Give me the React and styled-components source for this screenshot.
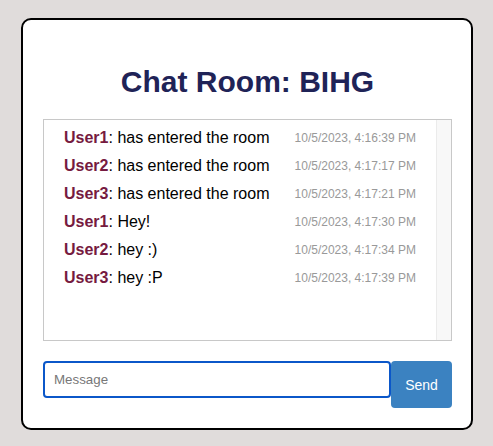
import React from "react";
import styled, { createGlobalStyle } from "styled-components";

const GlobalStyle = createGlobalStyle`
  html, body {
    margin: 0;
    padding: 0;
    background: #e0dcdb;
    font-family: "Liberation Sans", Arial, sans-serif;
  }
  * { box-sizing: border-box; }
`;

const Page = styled.div`
  padding: 18px 0 0 21px;
`;

const Card = styled.div`
  width: 452px;
  background: #fff;
  border: 2px solid #000;
  border-radius: 10px;
  padding: 0 19px 20px 20px;
`;

const Title = styled.h1`
  margin: 44px 0 19px;
  font-size: 30px;
  line-height: 36px;
  font-weight: 700;
  color: #1f2357;
  text-align: center;
`;

const ChatBox = styled.div`
  display: flex;
  height: 222px;
  border: 1px solid #c8c8c8;
`;

const MessageList = styled.div`
  flex: 1;
  overflow-y: auto;
  padding: 4px 0;
`;

const ScrollTrack = styled.div`
  width: 15px;
  flex: none;
  background: #f8f8f8;
  border-left: 1px solid #ebebeb;
`;

const Row = styled.div`
  display: flex;
  justify-content: space-between;
  align-items: center;
  padding: 5px 20px;
  line-height: 18px;
`;

const Text = styled.span`
  font-size: 16px;
  color: #000;
`;

const User = styled.strong`
  color: #761a40;
  font-weight: 700;
`;

const Time = styled.span`
  font-size: 12px;
  color: #999;
`;

const Form = styled.div`
  display: flex;
  align-items: flex-start;
  margin-top: 20px;
`;

const Input = styled.input`
  flex: 1;
  min-width: 0;
  height: 37px;
  border: 2px solid #0b57c9;
  border-radius: 4px;
  padding: 0 9px;
  font-family: "Liberation Sans", Arial, sans-serif;
  font-size: 13.33px;
  outline: none;
  &::placeholder { color: #777; }
`;

const Button = styled.button`
  width: 61px;
  height: 47px;
  border: none;
  border-radius: 4px;
  background: #3b82c1;
  color: #fff;
  font-family: "Liberation Sans", Arial, sans-serif;
  font-size: 14px;
  padding: 0;
`;

const messages = [
  ["User1", "has entered the room", "10/5/2023, 4:16:39 PM"],
  ["User2", "has entered the room", "10/5/2023, 4:17:17 PM"],
  ["User3", "has entered the room", "10/5/2023, 4:17:21 PM"],
  ["User1", "Hey!", "10/5/2023, 4:17:30 PM"],
  ["User2", "hey :)", "10/5/2023, 4:17:34 PM"],
  ["User3", "hey :P", "10/5/2023, 4:17:39 PM"],
];

export default function App() {
  return (
    <>
      <GlobalStyle />
      <Page>
        <Card>
          <Title>Chat Room: BIHG</Title>
          <ChatBox>
            <MessageList>
              {messages.map(([u, t, time], i) => (
                <Row key={i}>
                  <Text>
                    <User>{u}</User>: {t}
                  </Text>
                  <Time>{time}</Time>
                </Row>
              ))}
            </MessageList>
            <ScrollTrack />
          </ChatBox>
          <Form>
            <Input placeholder="Message" />
            <Button>Send</Button>
          </Form>
        </Card>
      </Page>
    </>
  );
}
